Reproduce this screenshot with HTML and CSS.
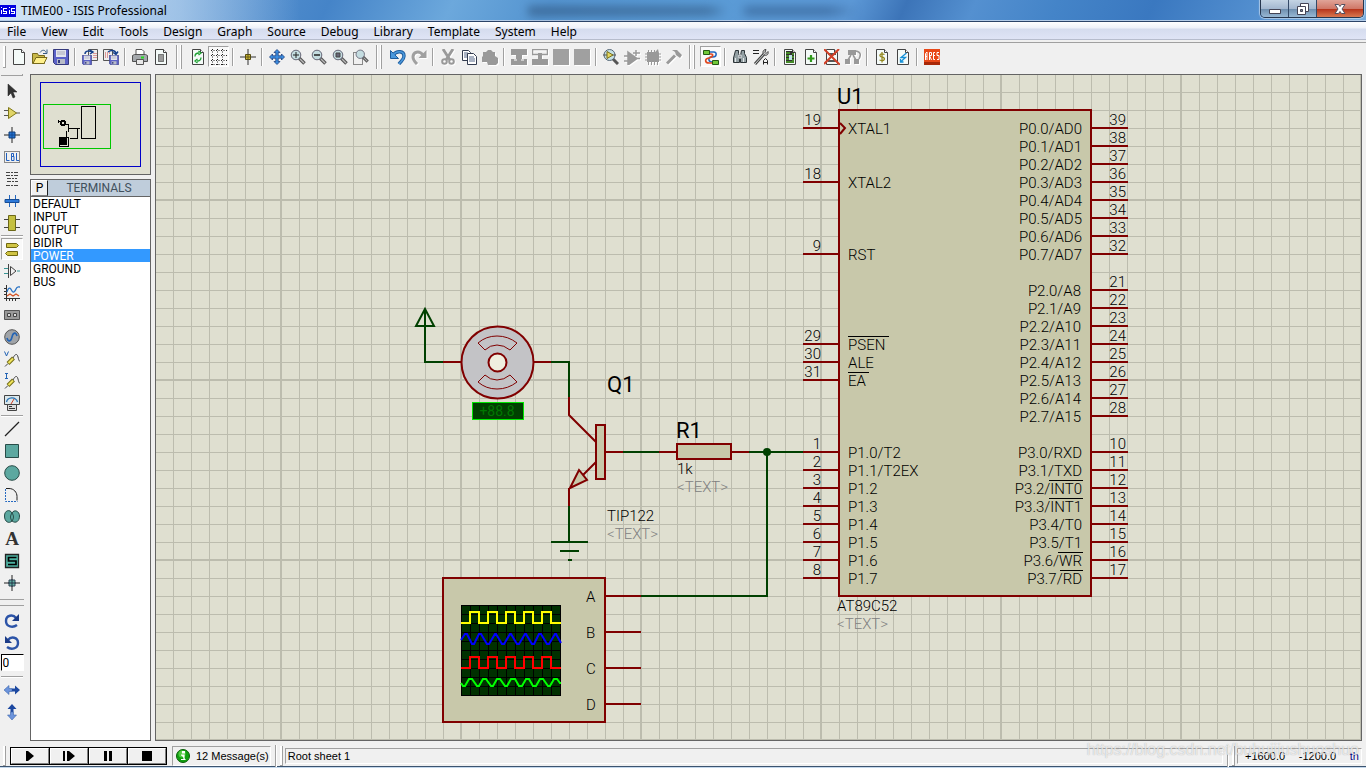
FILE: index.html
```html
<!DOCTYPE html>
<html lang="en">
<head>
    <meta charset="UTF-8">
    <meta name="viewport" content="width=device-width, initial-scale=1.0">
    <title>TIME00 - ISIS Professional</title>
    <link rel="stylesheet" href="styles.css">
</head>
<body>
    <!-- shapes shared by several icons -->
    <svg class="defs" aria-hidden="true">
        <symbol id="page" viewBox="0 0 16 16"><path d="M2.5.5h8l3 3v12h-11z" fill="#f4faf8" stroke="#444"/><path d="M10.500.5v3h3" fill="#fff" stroke="#444"/></symbol>
        <symbol id="disk" viewBox="0 0 16 16"><path d="M.5.5h15v15h-13l-2-2z" fill="#5c62c8" stroke="#35397c"/><path d="M3 1h10v7H3z" fill="#e4e6ee"/><path d="M4 3h8M4 5h8" stroke="#aab"/><path d="M4 10h8v5H4z" fill="#b8bcc8"/><path d="M5 11h2v3H5z" fill="#333a80"/></symbol>
        <symbol id="lens" viewBox="0 0 16 16"><path d="M9 9l5.500 5.500" stroke="#555" stroke-width="3.500"/><path d="M10 10l4 4" stroke="#bbb" stroke-width="1.200"/><circle cx="6" cy="6" r="4.800" fill="#c4dce0" stroke="#667"/></symbol>
    </svg>

    <header class="titlebar">
        <svg class="logo" viewBox="0 0 16 12" shape-rendering="crispEdges"><path fill="#0000e0" d="M0 0h16v12H0z"/><path d="M1.500 5v4M1.500 2v1M7 3.500H3.500v2.500H6.500v2.500H3M9.500 5v4M9.500 2v1M15 3.500h-3.500v2.500h3v2.500H11" fill="none" stroke="#fff"/></svg>
        <h1>TIME00 - ISIS Professional</h1>
        <span class="ghost"></span>
        <div class="window-buttons">
            <button class="win" aria-label="Minimize"><svg viewBox="0 0 16 16"><path d="M2.500 8.500h11v4h-11z" fill="#fff" stroke="#445"/></svg></button>
            <button class="win" aria-label="Restore"><svg viewBox="0 0 16 16"><path d="M5.500 2.500h8v8h-8z" fill="#fff" stroke="#445"/><path d="M2.500 5.500h8v8h-8z" fill="#fff" stroke="#445"/><path d="M5.500 8.500h2v2h-2z" fill="#789" stroke="#445"/></svg></button>
            <button class="win close" aria-label="Close"><svg viewBox="0 0 16 16"><path d="M3 3.500h3.500L8 5.500l1.500-2H13L10 8l3 4.500H9.500L8 10.500l-1.500 2H3L6 8z" fill="#fff" stroke="#545060"/></svg></button>
        </div>
    </header>

    <nav class="menubar">
        <a href="#">File</a><a href="#">View</a><a href="#">Edit</a><a href="#">Tools</a><a href="#">Design</a><a href="#">Graph</a><a href="#">Source</a><a href="#">Debug</a><a href="#">Library</a><a href="#">Template</a><a href="#">System</a><a href="#">Help</a>
    </nav>

    <div class="toolbar">
        <span class="grip"></span>
        <button class="tool" aria-label="New"><svg viewBox="0 0 16 16"><use href="#page"/></svg></button>
        <button class="tool" aria-label="Open"><svg viewBox="0 0 16 16"><path d="M.5 14.500v-10h5l1 2h6v8z" fill="#c8b848" stroke="#77691c"/><path d="M1 14.500l3-6h11l-3 6z" fill="#fff08c" stroke="#77691c"/><path d="M8 3.500c2-3 5-3 6 0M15 .500v4h-4" fill="none" stroke="#345a84"/></svg></button>
        <button class="tool" aria-label="Save"><svg viewBox="0 0 16 16"><use href="#disk"/></svg></button>
        <span class="sep"></span>
        <button class="tool" aria-label="Import section"><svg viewBox="0 0 16 16"><path d="M6.500.5h9v11h-9z" fill="#eee" stroke="#555"/><path d="M12 4v6M14 4v6" stroke="#c44" stroke-dasharray="1 1"/><use href="#disk" y="6" width="10" height="10"/><path d="M3 5c0-3 4-4 7-2M8 1l3 2-3 2" fill="none" stroke="#15408c" stroke-width="1.500"/></svg></button>
        <button class="tool" aria-label="Export section"><svg viewBox="0 0 16 16"><path d="M.5.5h9v11h-9z" fill="#eee" stroke="#555"/><path d="M2 4h6M2 6h4M2 8h4" stroke="#c44" stroke-dasharray="1 1"/><use href="#disk" x="6" y="6" width="10" height="10"/><path d="M5 3c4-3 8-1 8 2M10 3.500l3 2 2-3" fill="none" stroke="#15408c" stroke-width="1.500"/></svg></button>
        <span class="sep"></span>
        <button class="tool" aria-label="Print"><svg viewBox="0 0 16 16"><path d="M4 6V.5h6l2 2V6" fill="#fff" stroke="#555"/><path d="M.5 6.500l2-1h11l2 1v6H.5z" fill="#a4a8ac" stroke="#505050"/><path d="M4.500 10.500h7v5h-7z" fill="#e8e8e8" stroke="#555"/><path d="M9 8.500h3" stroke="#2d2" stroke-width="2"/></svg></button>
        <button class="tool" aria-label="Mark output area"><svg viewBox="0 0 16 16"><use href="#page"/><path d="M5.500 5.500h5v7h-5z" fill="#999" stroke="#222" stroke-dasharray="1 1"/></svg></button>
        <span class="break"></span>
        <button class="tool" aria-label="Redraw"><svg viewBox="0 0 16 16"><use href="#page"/><path d="M5 7.500c0-2.500 1.500-3.500 4-3.500M8.500 2l2.500 2-2.500 2M11 8.500c0 2.500-1.500 3.500-4 3.500M7.500 10L5 12l2.500 2" fill="none" stroke="#1ca030" stroke-width="1.300"/></svg></button>
        <button class="tool pressed" aria-label="Toggle grid"><svg viewBox="0 0 16 16"><path d="M0 1.500h16M0 6.500h16M0 11.500h16M1.500 0v16M6.500 0v16M11.500 0v16M0 15.500h16" stroke="#222" stroke-dasharray="1 1.500"/></svg></button>
        <span class="sep"></span>
        <button class="tool" aria-label="Origin"><svg viewBox="0 0 16 16"><path d="M8 0v16M0 8h16" stroke="#333"/><path d="M5.500 5.500h5v5h-5z" fill="#ccb830" stroke="#554c12"/><path d="M8 6v4M6 8h4" stroke="#665a18"/></svg></button>
        <span class="sep"></span>
        <button class="tool" aria-label="Pan"><svg viewBox="0 0 16 16"><path d="M8 .5l3 3H9.200v3.300h3.300V5l3 3-3 3V9.200H9.200v3.300H11l-3 3-3-3h1.800V9.200H3.500V11l-3-3 3-3v1.800h3.300V3.500H5z" fill="#3b8de0" stroke="#1a3c7c" stroke-width=".8"/></svg></button>
        <button class="tool" aria-label="Zoom in"><svg viewBox="0 0 16 16"><use href="#lens"/><path d="M6 3v6M3 6h6" stroke="#222"/></svg></button>
        <button class="tool" aria-label="Zoom out"><svg viewBox="0 0 16 16"><use href="#lens"/><path d="M3 6h6" stroke="#222" stroke-width="1.500"/></svg></button>
        <button class="tool" aria-label="Zoom all"><svg viewBox="0 0 16 16"><use href="#lens"/><path d="M4 4h4v4H4z" fill="#667" stroke="#444"/></svg></button>
        <button class="tool" aria-label="Zoom area"><svg viewBox="0 0 16 16"><path d="M.5 3.500h9v12h-9z" fill="none" stroke="#222" stroke-dasharray="1 1"/><use href="#lens" x="2" width="14" height="14"/></svg></button>
        <span class="break"></span>
        <button class="tool" aria-label="Undo"><svg viewBox="0 0 16 16"><path d="M3 6c4-5 11-4 11 1 0 4-3 5-5 8" fill="none" stroke="#1f5c9c" stroke-width="3.400"/><path d="M.5 1.500v8h8z" fill="#4a98dc" stroke="#1f5c9c"/><path d="M3 6c4-5 11-4 11 1 0 4-3 5-5 8" fill="none" stroke="#4a98dc" stroke-width="1.600"/></svg></button>
        <button class="tool" aria-label="Redo" disabled><svg viewBox="0 0 16 16"><path d="M12 6C8 1 2 3 2 8c0 3 2 5 4 7" fill="none" stroke="#a0a0a0" stroke-width="3"/><path d="M15.500 1v8h-8z" fill="#a0a0a0"/></svg></button>
        <span class="sep"></span>
        <button class="tool" aria-label="Cut" disabled><svg viewBox="0 0 16 16"><path d="M3 0l7 11M13 0L6 11" stroke="#999" stroke-width="2.800"/><circle cx="4.500" cy="12.500" r="2.300" fill="none" stroke="#999" stroke-width="2"/><circle cx="11.500" cy="12.500" r="2.300" fill="none" stroke="#999" stroke-width="2"/></svg></button>
        <button class="tool" aria-label="Copy"><svg viewBox="0 0 16 16"><path d="M1.500 1.500h6l2 2v8h-8z" fill="#fff" stroke="#333c50"/><path d="M3 4h4M3 6h5M3 8h4" stroke="#568"/><path d="M6.500 4.500h6l3 3v8h-9z" fill="#fff" stroke="#333c50"/><path d="M8 8h5M8 10h6M8 12h6" stroke="#568"/></svg></button>
        <button class="tool" aria-label="Paste" disabled><svg viewBox="0 0 16 16"><path d="M1 3h3l2-2h3l2 2h2v4l3 2v5l-2 2H6l-1-3H0V8l1-1z" fill="#999"/></svg></button>
        <span class="sep"></span>
        <button class="tool" aria-label="Block copy" disabled><svg viewBox="0 0 16 16"><path d="M0 0h16v6h-5v4h5v6H0v-6h5V6H0z" fill="#999"/><path d="M3 11h3M10 11h3" stroke="#fff"/></svg></button>
        <button class="tool" aria-label="Block move" disabled><svg viewBox="0 0 16 16"><path d="M.5.500h15v5H.5z" fill="none" stroke="#999" stroke-width="1.500"/><path d="M6 4h4v6h6v6H0v-6h6z" fill="#999"/></svg></button>
        <button class="tool" aria-label="Block rotate" disabled><svg viewBox="0 0 16 16"><path d="M0 0h16v16H0z" fill="#a0a0a0"/></svg></button>
        <button class="tool" aria-label="Block delete" disabled><svg viewBox="0 0 16 16"><path d="M0 0h16v16H0z" fill="#a0a0a0"/></svg></button>
        <span class="sep"></span>
        <button class="tool" aria-label="Pick parts"><svg viewBox="0 0 16 16"><path d="M10 10l5 5" stroke="#555" stroke-width="3"/><circle cx="6.500" cy="6" r="5.500" fill="#c4e0e4" stroke="#567"/><path d="M0 6h13" stroke="#555"/><path d="M4 2.500L10 6 4 9.500z" fill="#e4d860" stroke="#776c1c"/></svg></button>
        <button class="tool" aria-label="Make device" disabled><svg viewBox="0 0 16 16"><path d="M4 3l9 6.500L4 16zM0 7h5M0 12h5M12 9.500h4M12 1v6M9 4h7" fill="#999" stroke="#999" stroke-width="1.500"/></svg></button>
        <button class="tool" aria-label="Packaging tool" disabled><svg viewBox="0 0 16 16"><path d="M2 3h8l3-3 1 4v9H2z" fill="#999"/><path d="M3.500 1v15M6.500 1v15M9.500 1v15M12.500 1v15M0 5h16M0 8h16M0 11h16" stroke="#999"/></svg></button>
        <button class="tool" aria-label="Decompose" disabled><svg viewBox="0 0 16 16"><path d="M1 14.500L9 6.500" stroke="#999" stroke-width="3"/><path d="M6 1h5l5 5-2 3-4-3-1-3z" fill="#999"/></svg></button>
        <span class="break"></span>
        <button class="tool pressed" aria-label="Wire autorouter"><svg viewBox="0 0 16 16"><path d="M6 3h5c3 0 3 5-1 5H8c-3 0-3 5 1 5" fill="none" stroke="#2468c0" stroke-width="1.600"/><path d="M6 5h2c3 0 2 3-2 4-5 1-4 5 0 5h4" fill="none" stroke="#e04820" stroke-width="1.600"/><path d="M.5 1.500h6v4h-6zM9.500 11.500h6v4h-6z" fill="#70c838" stroke="#245814"/></svg></button>
        <span class="sep"></span>
        <button class="tool" aria-label="Search and tag"><svg viewBox="0 0 16 16"><path d="M3.500 1.500h3v3l1 2v7h-6V9zM9.500 1.500h3v3l2 4v5h-6v-7z" fill="#94a0a4" stroke="#2c3438"/><path d="M7 6h2v3H7zM3.500 9v4M11.500 9v4" stroke="#e4e8e8" fill="#445"/></svg></button>
        <button class="tool" aria-label="Property assignment"><svg viewBox="0 0 16 16"><path d="M0 1.500h6M0 4.500h6" stroke="#222"/><path d="M2 15L11 5" stroke="#444" stroke-width="3"/><path d="M2 15L11 5" stroke="#d0d4d4"/><path d="M13 .5c-3 0-4 3-2 5s5 0 4-3l-2 2-1-1z" fill="#ccc" stroke="#444"/><path d="M10.500 15.500v-4l2-2 2 2v4M11 13.500h4" fill="none" stroke="#222"/></svg></button>
        <span class="sep"></span>
        <button class="tool" aria-label="Design explorer"><svg viewBox="0 0 16 16"><use href="#page"/><path d="M4 2h7l1 2v10H4z" fill="#333"/><path d="M4 4h4M4 7h3M4 10h3M4 13h8M10 5h2M10 8h2M10 11h2" stroke="#58e020"/><path d="M7 6h3v5H7z" fill="#c0e4e8"/></svg></button>
        <button class="tool" aria-label="New sheet"><svg viewBox="0 0 16 16"><use href="#page"/><path d="M8 6v7M4.500 9.500h7" stroke="#30981c" stroke-width="2.200"/></svg></button>
        <button class="tool" aria-label="Remove sheet"><svg viewBox="0 0 16 16"><use href="#page"/><path d="M4 5h8M4 12h8" stroke="#555" stroke-width="2"/><path d="M0 0l16 16M15 0L0 15" stroke="#d04028" stroke-width="2"/></svg></button>
        <button class="tool" aria-label="Exit to parent" disabled><svg viewBox="0 0 16 16"><path d="M3 1h8v5H3zM0 10h5v5H0zM9 10h5v5H9z" fill="#999"/><path d="M6 6l-3 5M8 6l3 5M11 2c5 1 5 4 3 8" fill="none" stroke="#999" stroke-width="1.600"/></svg></button>
        <span class="sep"></span>
        <button class="tool" aria-label="Bill of materials"><svg viewBox="0 0 16 16"><use href="#page"/><path d="M10.500 5.500c-5-2-6 2-2.500 2.500 4 .5 3 5-2.500 3M8 3v10.500" fill="none" stroke="#948820" stroke-width="1.300"/></svg></button>
        <button class="tool" aria-label="Electrical check"><svg viewBox="0 0 16 16"><use href="#page"/><path d="M11.500 4L6 8.500h4.500L5.500 13M5.500 10v3h3" fill="none" stroke="#1490d8" stroke-width="1.300"/></svg></button>
        <span class="sep"></span>
        <button class="tool" aria-label="ARES"><svg viewBox="0 0 16 16"><path d="M0 0h16v16H0z" fill="#e84818"/><path d="M0 13h16v3H0z" fill="#a82808"/><path d="M1.500 11V4.500L3 3v8M1 7.500h2M5.500 11V3.500h2v3h-2l2 4.500M11 3.500H9.500v7H11M9.500 6.500H11M15 3.500h-2v3h2v4h-2" fill="none" stroke="#fff"/></svg></button>
    </div>

    <main class="workspace">
        <div class="modes">
            <span class="hgrip"></span>
            <button class="mode" aria-label="Selection"><svg viewBox="0 0 16 16"><path d="M4 1v12l3-3 2 5 2-1-2-5h4z" fill="#333" stroke="#222" stroke-width=".5"/></svg></button>
            <button class="mode" aria-label="Component"><svg viewBox="0 0 16 16"><path d="M0 5.500h4M0 10.500h4M12 8h4" stroke="#555"/><path d="M4.500 2.500L12.500 8l-8 5.500z" fill="#e0d468" stroke="#807818"/></svg></button>
            <button class="mode" aria-label="Junction dot"><svg viewBox="0 0 16 16"><path d="M8 0v16M0 8h16" stroke="#222"/><path d="M5 5h6v6H5z" fill="#2474d4" stroke="#123c74"/><path d="M8 5v6M5 8h6" stroke="#124a94"/></svg></button>
            <button class="mode" aria-label="Wire label"><svg viewBox="0 0 16 16"><path d="M.5 2.500h15v11H.5z" fill="none" stroke="#222" stroke-dasharray="1 1"/><path d="M2.500 4v7.500h3M7.500 4.500h2v3h-2zM7.500 7.500h2.500v4H7.500zM12.500 4v7.500h2.500" fill="none" stroke="#2060c0"/></svg></button>
            <button class="mode" aria-label="Text script"><svg viewBox="0 0 16 16"><path d="M2 1.500h12M2 4.500h12M3 7.500h10M3 10.500h11M2 14.500h12" stroke="#444" stroke-dasharray="4 1 2 1"/></svg></button>
            <button class="mode" aria-label="Bus"><svg viewBox="0 0 16 16"><path d="M5.500 2v12M11.500 2v12" stroke="#2468c0"/><path d="M1 6.500h14v3H1z" fill="#2c78d8" stroke="#174c94"/></svg></button>
            <button class="mode" aria-label="Subcircuit"><svg viewBox="0 0 16 16"><path d="M0 4.500h4M0 12.500h4M12 4.500h4M12 12.500h4" stroke="#444"/><path d="M4.500.5h7v15h-7z" fill="#c4c040" stroke="#6c6818"/></svg></button>
            <span class="hsep"></span>
            <button class="mode pressed" aria-label="Terminals"><svg viewBox="0 0 16 16"><path d="M2.500 2.500h10l2 2-2 2h-10zM13.500 10.500h-10l-2 2 2 2h10z" fill="#d0c444" stroke="#706810"/></svg></button>
            <button class="mode" aria-label="Device pins"><svg viewBox="0 0 16 16"><path d="M0 5.500h4M0 10.500h4M13 8h3" stroke="#389494"/><path d="M4.500 1v14M6.500 3.500L12 8l-5.500 4.500z" fill="none" stroke="#444"/></svg></button>
            <button class="mode" aria-label="Graph"><svg viewBox="0 0 16 16"><path d="M2.500 0v16M0 13.500h16M0 3.500h2M0 6.500h2M0 9.500h2M5.500 14v2M8.500 14v2M11.500 14v2" stroke="#333"/><path d="M3 7c2-7 4-3 5-1s3 1 4-2 2-2 4-2" fill="none" stroke="#2c74c4" stroke-width="1.300"/><path d="M3 11l3-2 3 2 3-2 3 2" fill="none" stroke="#d45020" stroke-width="1.300"/></svg></button>
            <button class="mode" aria-label="Tape recorder"><svg viewBox="0 0 16 16"><path d="M.5 3.500h15v9H.5z" fill="#999" stroke="#555"/><path d="M3.500 6.500h3v3h-3zM9.500 6.500h3v3h-3z" fill="#ddd" stroke="#444"/></svg></button>
            <button class="mode" aria-label="Generator"><svg viewBox="0 0 16 16"><circle cx="8" cy="8" r="7.300" fill="#a0a4a8" stroke="#555"/><path d="M3 9c1 4 4 4 5-1s4-5 5-1" fill="none" stroke="#2464b4" stroke-width="1.600"/></svg></button>
            <button class="mode" aria-label="Voltage probe"><svg viewBox="0 0 16 16"><path d="M.5.5L2.500 5 4.500.5" fill="none" stroke="#2464b4"/><path d="M1 15.500l3-3" stroke="#444"/><path d="M4 12.500L9.500 7" stroke="#777018" stroke-width="4"/><path d="M4.500 12L9 7.500" stroke="#f0e45c" stroke-width="2"/><path d="M9 7c2-4 4-5 5-1s1 4 2 4" fill="none" stroke="#444"/></svg></button>
            <button class="mode" aria-label="Current probe"><svg viewBox="0 0 16 16"><path d="M1 .5h3M2.500.5v5M1 5.500h3" fill="none" stroke="#2464b4"/><path d="M1 15.500l3-3" stroke="#444"/><path d="M4 12.500L9.500 7" stroke="#777018" stroke-width="4"/><path d="M4.500 12L9 7.500" stroke="#f0e45c" stroke-width="2"/><path d="M9 7c2-4 4-5 5-1s1 4 2 4" fill="none" stroke="#444"/></svg></button>
            <button class="mode" aria-label="Virtual instruments"><svg viewBox="0 0 16 16"><path d="M.5.5h15v9H.5z" fill="#dce8ec" stroke="#444"/><path d="M2.500 7c1-5 9-6 11 0" fill="none" stroke="#2c74b4" stroke-width="1.300"/><path d="M7 9l3-5" stroke="#d43c20"/><path d="M3.500 9.500h9v6h-9z" fill="#ddd" stroke="#444"/><path d="M5 11.500h3M5 13.500h6" stroke="#333"/></svg></button>
            <span class="hsep"></span>
            <button class="mode" aria-label="Line"><svg viewBox="0 0 16 16"><path d="M1 15L15 1" stroke="#222" stroke-width="1.300"/></svg></button>
            <button class="mode" aria-label="Box"><svg viewBox="0 0 16 16"><path d="M1.500 1.500h13v13h-13z" fill="#5ca8a0" stroke="#284c48"/></svg></button>
            <button class="mode" aria-label="Circle"><svg viewBox="0 0 16 16"><circle cx="8" cy="8" r="7.300" fill="#5ca8a0" stroke="#284c48"/></svg></button>
            <button class="mode" aria-label="Arc"><svg viewBox="0 0 16 16"><path d="M1.500 2v12.500h12" fill="none" stroke="#2468c0" stroke-dasharray="2 1"/><path d="M2 1.500h3c5 0 8 4 8 8v4" fill="none" stroke="#222"/></svg></button>
            <button class="mode" aria-label="Path"><svg viewBox="0 0 16 16"><path d="M8 4C6 0 .5 1 .5 7S5 15 8 12c4 3 7.500 0 7.500-5S10 0 8 4z" fill="#5ca8a0" stroke="#284c48"/><path d="M8 4c-2 3-2 5 0 8 2-3 2-5 0-8" fill="none" stroke="#284c48"/></svg></button>
            <button class="mode letter" aria-label="Text">A</button>
            <button class="mode" aria-label="Symbol"><svg viewBox="0 0 16 16"><path d="M1.500 1.500h13v13h-13z" fill="#4cb0a0" stroke="#222" stroke-width="1.300"/><path d="M12.500 4.500h-8v3.500h7.500v3.500h-8" fill="none" stroke="#000" stroke-width="1.700"/></svg></button>
            <button class="mode" aria-label="Marker"><svg viewBox="0 0 16 16"><path d="M8 0v16M0 8h16" stroke="#222"/><path d="M5 5h6v6H5z" fill="#60b0a4" stroke="#345"/><path d="M8 4v8M4 8h8" stroke="#234"/></svg></button>
            <span class="hbreak"></span>
            <button class="mode" aria-label="Rotate clockwise"><svg viewBox="0 0 16 16"><path d="M12 5C9 1 2 2 2 8s7 7 11 4" fill="none" stroke="#2c54a8" stroke-width="2.400"/><path d="M15 1v7H8z" fill="#1c3c88"/></svg></button>
            <button class="mode" aria-label="Rotate anticlockwise"><svg viewBox="0 0 16 16"><path d="M4 5c3-4 10-3 10 3s-7 7-11 4" fill="none" stroke="#2c54a8" stroke-width="2.400"/><path d="M1 1v7h7z" fill="#1c3c88"/></svg></button>
            <input class="angle" type="text" value="0" aria-label="Angle">
            <span class="hsep"></span>
            <button class="mode" aria-label="Mirror X"><svg viewBox="0 0 16 16"><path d="M0 8l5-4.500V6.500h3v3H5v3z" fill="#6c94dc" stroke="#3c64ac" stroke-width=".6"/><path d="M16 8l-5-4.500V6.500H8v3h3v3z" fill="#1c48a0"/></svg></button>
            <button class="mode" aria-label="Mirror Y"><svg viewBox="0 0 16 16"><path d="M8 0L3.500 5h3v3h3V5h3z" fill="#1c48a0"/><path d="M8 16l-4.500-5h3V8h3v3h3z" fill="#6c94dc" stroke="#3c64ac" stroke-width=".6"/></svg></button>
        </div>

        <aside class="side">
            <div class="overview">
                <svg viewBox="0 0 119 99" shape-rendering="crispEdges" fill="none">
                    <path d="M9.500 7.500h100v84h-100z" stroke="#0000c8"/>
                    <path d="M12.500 29.500h67v44h-67z" stroke="#00c800"/>
                    <path d="M50.500 31.500h14v32h-14zM37 53.500h12M39 63.500h7.500v-10" stroke="#000"/>
                    <path d="M27.500 45v3M28 46.500h3M35 49.500h2v7M35.500 56v6" stroke="#000"/>
                    <circle cx="32" cy="48" r="2" stroke="#000" stroke-width="2"/>
                    <path d="M28.500 62.500h9v9h-9z" stroke="#000"/>
                    <path d="M29 63h7v7h-7z" fill="#000"/>
                </svg>
            </div>
            <section class="picker">
                <div class="picker-head">
                    <button class="pick" aria-label="Pick devices">P</button>
                    <h2>TERMINALS</h2>
                </div>
                <ul class="terminals">
                    <li><button>DEFAULT</button></li>
                    <li><button>INPUT</button></li>
                    <li><button>OUTPUT</button></li>
                    <li><button>BIDIR</button></li>
                    <li><button class="selected">POWER</button></li>
                    <li><button>GROUND</button></li>
                    <li><button>BUS</button></li>
                </ul>
            </section>
        </aside>

        <div class="sheet">
            <svg class="schematic">
                <g transform="translate(-156 -75)">
                    <!-- U1 microcontroller -->
                    <g class="part">
                        <rect x="839" y="110" width="252" height="486"/>
                        <path class="none" d="M840 123l5 5-5 6"/>
                        <path d="M803 128h35M803 182h35M803 254h35M803 344h35M803 362h35M803 380h35M803 452h35M803 470h35M803 488h35M803 506h35M803 524h35M803 542h35M803 560h35M803 578h35"/>
                        <path d="M1092 128h36M1092 146h36M1092 164h36M1092 182h36M1092 200h36M1092 218h36M1092 236h36M1092 254h36M1092 290h36M1092 308h36M1092 326h36M1092 344h36M1092 362h36M1092 380h36M1092 398h36M1092 416h36M1092 452h36M1092 470h36M1092 488h36M1092 506h36M1092 524h36M1092 542h36M1092 560h36M1092 578h36"/>
                    </g>
                    <g class="label">
                        <text x="848" y="134">XTAL1</text>
                        <text x="848" y="188">XTAL2</text>
                        <text x="848" y="260">RST</text>
                        <text><tspan x="848" y="350">PSEN</tspan><tspan x="848" dy="18">ALE</tspan><tspan x="848" dy="18">EA</tspan></text>
                        <text><tspan x="848" y="458">P1.0/T2</tspan><tspan x="848" dy="18">P1.1/T2EX</tspan><tspan x="848" dy="18">P1.2</tspan><tspan x="848" dy="18">P1.3</tspan><tspan x="848" dy="18">P1.4</tspan><tspan x="848" dy="18">P1.5</tspan><tspan x="848" dy="18">P1.6</tspan><tspan x="848" dy="18">P1.7</tspan></text>
                    </g>
                    <g class="label end">
                        <text><tspan x="1082" y="134">P0.0/AD0</tspan><tspan x="1082" dy="18">P0.1/AD1</tspan><tspan x="1082" dy="18">P0.2/AD2</tspan><tspan x="1082" dy="18">P0.3/AD3</tspan><tspan x="1082" dy="18">P0.4/AD4</tspan><tspan x="1082" dy="18">P0.5/AD5</tspan><tspan x="1082" dy="18">P0.6/AD6</tspan><tspan x="1082" dy="18">P0.7/AD7</tspan></text>
                        <text><tspan x="1081" y="296">P2.0/A8</tspan><tspan x="1081" dy="18">P2.1/A9</tspan><tspan x="1081" dy="18">P2.2/A10</tspan><tspan x="1081" dy="18">P2.3/A11</tspan><tspan x="1081" dy="18">P2.4/A12</tspan><tspan x="1081" dy="18">P2.5/A13</tspan><tspan x="1081" dy="18">P2.6/A14</tspan><tspan x="1081" dy="18">P2.7/A15</tspan></text>
                        <text><tspan x="1082" y="458">P3.0/RXD</tspan><tspan x="1082" dy="18">P3.1/TXD</tspan><tspan x="1082" dy="18">P3.2/INT0</tspan><tspan x="1082" dy="18">P3.3/INT1</tspan><tspan x="1082" dy="18">P3.4/T0</tspan><tspan x="1082" dy="18">P3.5/T1</tspan><tspan x="1082" dy="18">P3.6/WR</tspan><tspan x="1082" dy="18">P3.7/RD</tspan></text>
                    </g>
                    <path class="overline" d="M848 336.500h41M848 372.500h21M1049 480.500h34M1049 498.500h34M1058 552.500h25M1060 570.500h23"/>
                    <g class="label end">
                        <text x="821" y="125">19</text>
                        <text x="821" y="179">18</text>
                        <text x="821" y="251">9</text>
                        <text><tspan x="821" y="341">29</tspan><tspan x="821" dy="18">30</tspan><tspan x="821" dy="18">31</tspan></text>
                        <text><tspan x="821" y="449">1</tspan><tspan x="821" dy="18">2</tspan><tspan x="821" dy="18">3</tspan><tspan x="821" dy="18">4</tspan><tspan x="821" dy="18">5</tspan><tspan x="821" dy="18">6</tspan><tspan x="821" dy="18">7</tspan><tspan x="821" dy="18">8</tspan></text>
                        <text><tspan x="1126" y="125">39</tspan><tspan x="1126" dy="18">38</tspan><tspan x="1126" dy="18">37</tspan><tspan x="1126" dy="18">36</tspan><tspan x="1126" dy="18">35</tspan><tspan x="1126" dy="18">34</tspan><tspan x="1126" dy="18">33</tspan><tspan x="1126" dy="18">32</tspan></text>
                        <text><tspan x="1126" y="287">21</tspan><tspan x="1126" dy="18">22</tspan><tspan x="1126" dy="18">23</tspan><tspan x="1126" dy="18">24</tspan><tspan x="1126" dy="18">25</tspan><tspan x="1126" dy="18">26</tspan><tspan x="1126" dy="18">27</tspan><tspan x="1126" dy="18">28</tspan></text>
                        <text><tspan x="1126" y="449">10</tspan><tspan x="1126" dy="18">11</tspan><tspan x="1126" dy="18">12</tspan><tspan x="1126" dy="18">13</tspan><tspan x="1126" dy="18">14</tspan><tspan x="1126" dy="18">15</tspan><tspan x="1126" dy="18">16</tspan><tspan x="1126" dy="18">17</tspan></text>
                    </g>
                    <text class="ref" x="837" y="104">U1</text>
                    <text class="label" x="837" y="611">AT89C52</text>
                    <text class="label hint" x="837" y="629">&lt;TEXT&gt;</text>

                    <!-- wires -->
                    <path class="wire" d="M425 310v52h18M416 326h18l-9-17zM551 362h18v35M569 506v36M551 542h37M560 551h19M568 560h4M623 452h36M749 452h54M767 452v144H641"/>
                    <circle cx="767" cy="452" r="4" fill="#004000"/>

                    <!-- motor -->
                    <g class="part">
                        <path d="M443 362h18M533 362h18"/>
                        <circle class="motor" cx="497.500" cy="362.500" r="36"/>
                        <path class="thin" d="M478 343q8-7 19-7t20 7l-7 7q-6-5-13-5t-12 5zM478 382q8 7 19 7t20-7l-7-7q-6 5-13 5t-12-5z"/>
                        <circle class="hub" cx="497.500" cy="362.500" r="9"/>
                    </g>
                    <rect x="472.500" y="402.500" width="51" height="17" fill="#004000" stroke="#00e800"/>
                    <text class="readout" x="497" y="416">+88.8</text>

                    <!-- Q1 transistor -->
                    <g class="part">
                        <path class="none" d="M569 397v18l27 27M596 462l-14 14M569 488v18M606 452h17"/>
                        <rect x="596" y="425" width="9" height="54"/>
                        <path d="M570 488l9-18 8 10z"/>
                    </g>
                    <text class="ref" x="607" y="392">Q1</text>
                    <text class="label" x="607" y="521">TIP122</text>
                    <text class="label hint" x="607" y="539">&lt;TEXT&gt;</text>

                    <!-- R1 resistor -->
                    <g class="part">
                        <path d="M659 452h18M732 452h17"/>
                        <rect x="677" y="444" width="54" height="15"/>
                    </g>
                    <text class="ref" x="676" y="438">R1</text>
                    <text class="label" x="677" y="474">1k</text>
                    <text class="label hint" x="677" y="492">&lt;TEXT&gt;</text>

                    <!-- oscilloscope -->
                    <g class="part">
                        <rect x="443" y="578" width="162" height="144"/>
                        <path d="M606 596h35M606 632h35M606 668h35M606 704h35"/>
                    </g>
                    <rect x="461" y="605" width="100" height="91" fill="#003000"/>
                    <path class="screen-grid" d="M461.500 605v91M470.500 605v91M479.500 605v91M488.500 605v91M497.500 605v91M506.500 605v91M515.500 605v91M524.500 605v91M533.500 605v91M542.500 605v91M551.500 605v91M560.500 605v91M461 605.500h100M461 614.500h100M461 623.500h100M461 632.500h100M461 641.500h100M461 650.500h100M461 659.500h100M461 668.500h100M461 677.500h100M461 686.500h100M461 695.500h100"/>
                    <g class="trace">
                        <path stroke="#ffff00" d="M461 623h9v-11h9v11h9v-11h9v11h9v-11h9v11h9v-11h9v11h9v-11h9v11h10"/>
                        <path stroke="#0000ff" d="M461 640l4-6h2l5 10h2l5-10h2l6 10h2l6-10h1l6 10h2l6-10h1l6 10h2l6-10h1l6 10h2l5-10h2l6 10h2l6-10h1l5 9"/>
                        <path stroke="#ff0000" d="M461 668h9v-11h9v11h9v-11h9v11h9v-11h9v11h9v-11h9v11h9v-11h9v11h10"/>
                        <path stroke="#00ff00" d="M461 683l2 3h2l4-7h3l5 7h2l4-7h3l5 7h2l4-7h3l5 7h2l4-7h4l4 7h3l4-7h3l4 7h3l4-7h3l5 7h2l4-7h3l3 4h1"/>
                    </g>
                    <g class="label">
                        <text x="586" y="602">A</text>
                        <text x="586" y="638">B</text>
                        <text x="586" y="674">C</text>
                        <text x="586" y="710">D</text>
                    </g>
                </g>
            </svg>
        </div>
    </main>

    <footer class="statusbar">
        <span class="grip"></span>
        <div class="playback">
            <button aria-label="Play"><svg viewBox="0 0 16 10"><path d="M4 0h2l6 5-6 5H4z"/></svg></button>
            <button aria-label="Step"><svg viewBox="0 0 16 10"><path d="M2 0h2v10H2zM6 0h2l6 5-6 5H6z"/></svg></button>
            <button aria-label="Pause"><svg viewBox="0 0 16 10"><path d="M4 0h3v10H4zM9 0h3v10H9z"/></svg></button>
            <button aria-label="Stop"><svg viewBox="0 0 16 10"><path d="M3 0h10v10H3z"/></svg></button>
        </div>
        <button class="messages">
            <svg viewBox="0 0 14 14"><circle cx="7" cy="7" r="6.500" fill="#10a010" stroke="#085c08"/><circle cx="6" cy="5" r="3.500" fill="#50cc40"/><path d="M5 6h3v4.500h1.500M5 10.500h3M6.500 2.500h2v1.500h-2z" fill="#fff" stroke="#fff" stroke-width="1.200"/></svg>
            12 Message(s)
        </button>
        <span class="bar"></span>
        <span class="grip"></span>
        <div class="field sheet-name">Root sheet 1</div>
        <span class="bar"></span>
        <span class="grip"></span>
        <div class="field coords"><span>+1600.0</span><span>-1200.0</span><span class="unit">th</span></div>
        <span class="watermark">https://blog.csdn.net/buhuijiushuoshuo</span>
    </footer>
    <div class="taskbar"></div>
</body>
</html>
```

FILE: styles.css
```css
* { margin: 0; padding: 0; box-sizing: border-box; }
body {
    display: flex;
    flex-direction: column;
    height: 100vh;
    overflow: hidden;
    background: #f0f0f0;
    color: #000;
    font-family: "Noto Sans", "Open Sans", sans-serif;
    font-size: 12px;
}
button { border: none; background: none; font: inherit; color: inherit; }
svg { display: block; }
.defs { position: absolute; width: 0; height: 0; }

/* title bar */
.titlebar {
    display: flex;
    align-items: center;
    flex: none;
    height: 22px;
    border-bottom: 1px solid #2c4468;
    box-shadow: inset 0 -1px #b4cce8;
    background:
        linear-gradient(90deg, rgba(220,234,248,.9) 0, rgba(200,222,244,.6) 180px, transparent 300px),
        linear-gradient(115deg, #7fb0e0 0, #4584c8 24%, #6ca8dc 33%, #5494d0 40%, #5a9bd6 52%, #5c98d6 62%, #3c74b8 66%, #5490d0 71%, #4484c8 77%, #3a78c0 84%, #5490d0 92%, #78acdc 100%);
}
.logo { width: 16px; height: 12px; }
.titlebar h1 {
    margin-left: 5px;
    font-size: 12px;
    font-weight: normal;
    line-height: 20px;
}
.ghost {
    width: 330px;
    height: 10px;
    margin-left: 361px;
    background: linear-gradient(90deg, #27476c 0, #2c5078 180px, transparent 200px, transparent 212px, #2c5484 220px, #2c5484 300px, transparent 330px);
    opacity: .5;
    filter: blur(4px);
}
.window-buttons {
    display: flex;
    align-self: flex-start;
    height: 18px;
    margin: 0 2px 0 auto;
    border: 1px solid #26364e;
    border-top: none;
    border-radius: 0 0 5px 5px;
    overflow: hidden;
    box-shadow: 0 0 1px 1px rgba(255,255,255,.5);
}
.win {
    display: flex;
    align-items: center;
    justify-content: center;
    width: 28px;
    border-right: 1px solid #344a68;
    background: linear-gradient(#c4d4e4 0, #a4b8d0 50%, #6c8cac 51%, #98b8d4 100%);
}
.win svg { width: 16px; height: 16px; }
.close {
    width: 46px;
    border-right: none;
    background: linear-gradient(#e0a498 0, #d07868 50%, #b43018 51%, #d87850 100%);
}

/* menus */
.menubar {
    display: flex;
    flex: none;
    gap: 15px;
    height: 21px;
    padding-left: 7px;
    border-bottom: 1px solid #a0a0a0;
    box-shadow: inset 0 -2px #f0f0f0, inset 0 -3px #b6bccc;
    background: linear-gradient(#fff 0, #eef1f9 6px, #d5dcee 7px, #e0e5f6 18px);
}
.menubar a {
    color: #000;
    text-decoration: none;
    line-height: 19px;
}

/* top toolbar */
.toolbar {
    display: flex;
    align-items: center;
    flex: none;
    height: 31px;
    padding: 0 0 4px 3px;
}
.grip {
    flex: none;
    width: 3px;
    height: 22px;
    margin-right: 2px;
    border-right: 1px solid #a0a0a0;
    border-bottom: 1px solid #a0a0a0;
    background: #fff;
}
.tool {
    display: flex;
    align-items: center;
    justify-content: center;
    flex: none;
    width: 21px;
    height: 21px;
}
.tool svg, .mode svg { flex: none; width: 16px; height: 16px; }
.tool:disabled svg { filter: drop-shadow(1px 1px 0 #fff); }
.pressed {
    border: 1px solid #a0a0a0;
    border-right-color: #fff;
    border-bottom-color: #fff;
    background: #f9f9f9;
}
.sep {
    flex: none;
    width: 2px;
    height: 18px;
    margin: 0 3px;
    border-left: 1px solid #a0a0a0;
    border-right: 1px solid #fff;
}
.break {
    flex: none;
    width: 6px;
    height: 24px;
    margin: 0 5px;
    border-left: 1px solid #a0a0a0;
    border-right: 1px solid #a0a0a0;
    background: linear-gradient(90deg, #fff 1px, transparent 1px, transparent 3px, #fff 3px);
}

/* main area */
.workspace {
    display: flex;
    flex: 1;
    min-height: 0;
    padding-right: 4px;
}
.modes {
    display: flex;
    flex-direction: column;
    align-items: center;
    flex: none;
    width: 30px;
    padding-right: 6px;
}
.hgrip {
    flex: none;
    width: 22px;
    height: 2px;
    margin-bottom: 4px;
    border-bottom: 1px solid #a0a0a0;
    border-right: 1px solid #a0a0a0;
}
.mode {
    display: flex;
    align-items: center;
    justify-content: center;
    flex: none;
    width: 22px;
    height: 22px;
}
.letter {
    font: bold 19px "Liberation Serif", serif;
    color: #333;
}
.hsep {
    flex: none;
    width: 22px;
    height: 2px;
    margin: 1px 0;
    border-top: 1px solid #a0a0a0;
    border-bottom: 1px solid #fff;
}
.hbreak {
    flex: none;
    width: 24px;
    height: 7px;
    margin: 5px 0 4px;
    border-top: 1px solid #a0a0a0;
    border-bottom: 1px solid #a0a0a0;
}
.angle {
    flex: none;
    width: 23px;
    height: 17px;
    margin: 0 0 4px;
    padding-left: 1px;
    border: 1px solid #fff;
    border-top-color: #000;
    border-left-color: #000;
    font: 12px Roboto, sans-serif;
}

.side {
    display: flex;
    flex-direction: column;
    gap: 4px;
    flex: none;
    width: 121px;
    margin-right: 4px;
    font-family: Roboto, "Liberation Sans", sans-serif;
}
.overview {
    border: 1px solid #646464;
    background: #dfdfd0;
}
.picker {
    flex: 1;
    border: 1px solid #646464;
    background: #fff;
}
.picker-head {
    display: flex;
    height: 17px;
    background: #bfcddb;
    border-bottom: 1px solid #646464;
}
.picker-head h2 {
    flex: 1;
    font-size: 12px;
    font-weight: normal;
    line-height: 16px;
    text-align: center;
    color: #40505c;
}
.pick {
    width: 17px;
    border: 1px solid #fff;
    border-right-color: #222;
    border-bottom-color: #808080;
    background: #f0f0f0;
    line-height: 14px;
}
.terminals { list-style: none; }
.terminals button {
    display: block;
    width: 100%;
    height: 13px;
    padding: 1px 0 0 2px;
    line-height: 13px;
    text-align: left;
}
.terminals .selected { background: #3399ff; color: #fff; }

.sheet {
    flex: 1;
    min-width: 0;
    border: 1px solid #646464;
    background-color: #dfdfd0;
    background-image:
        linear-gradient(90deg, #bcbcae 2px, transparent 2px),
        linear-gradient(#bcbcae 2px, transparent 2px),
        linear-gradient(90deg, #bcbcae 1px, transparent 1px),
        linear-gradient(#bcbcae 1px, transparent 1px);
    background-size: 180px 180px, 180px 180px, 18px 18px, 18px 18px;
    background-position: 124px 124px, 124px 124px, 17px 17px, 17px 17px;
}
.schematic { width: 100%; height: 100%; }
.part { fill: #c8c8aa; stroke: #800000; stroke-width: 2; }
.part .none { fill: none; }
.part .motor { fill: #c3c3c6; }
.part .hub { fill: #efefdf; }
.part .thin { fill: none; stroke-width: 1; }
.wire { fill: none; stroke: #004000; stroke-width: 2; }
.label, .ref { font-family: Roboto, "Liberation Sans", sans-serif; font-weight: 300; font-size: 15px; }
.ref { font-size: 22px; font-weight: 400; }
.end { text-anchor: end; }
.hint { fill: #808080; }
.overline { stroke: #000; }
.readout { font: 14px Roboto, sans-serif; fill: #007800; text-anchor: middle; }
.screen-grid { stroke: #000; }
.trace { fill: none; stroke-width: 2; }

/* status bar */
.statusbar {
    position: relative;
    display: flex;
    align-items: center;
    flex: none;
    height: 25px;
    padding: 4px 4px 0 3px;
    font-family: "Liberation Sans", sans-serif;
    font-size: 12px;
}
.statusbar .grip { height: 20px; }
.playback {
    display: flex;
    margin: 0 5px 0 2px;
    border: 1px solid #000;
    background: #000;
    gap: 1px;
}
.playback button {
    display: flex;
    align-items: center;
    justify-content: center;
    width: 38px;
    height: 16px;
    border: 1px solid #fff;
    border-right-color: #808080;
    border-bottom-color: #808080;
    background: #f0f0f0;
}
.playback svg { width: 16px; height: 10px; }
.messages {
    display: flex;
    align-items: center;
    gap: 6px;
    height: 20px;
    padding: 0 1px 0 3px;
    border: 1px solid #a0a0a0;
    border-right-color: #fff;
    border-bottom-color: #fff;
    font-size: 11px;
}
.messages svg { width: 14px; height: 14px; }
.bar {
    width: 2px;
    height: 22px;
    margin: 0 3px 0 4px;
    border-left: 1px solid #a0a0a0;
    border-right: 1px solid #fff;
}
.field {
    height: 16px;
    padding: 0 2px;
    border: 1px solid #a0a0a0;
    border-right-color: #fff;
    border-bottom-color: #fff;
    font-size: 11px;
    line-height: 14px;
}
.sheet-name { flex: 1; }
.coords {
    display: flex;
    justify-content: space-between;
    width: 125px;
    padding: 0 2px 0 7px;
}
.unit { color: #000080; }
.watermark {
    position: absolute;
    right: 7px;
    top: 0;
    font-size: 16px;
    line-height: 18px;
    color: rgba(255,255,255,.7);
    text-shadow: 0 0 1px rgba(120,120,120,.6);
    pointer-events: none;
}
.taskbar {
    flex: none;
    height: 2px;
    border-top: 1px solid #3c5470;
    background: #c4d8ec;
}
```
